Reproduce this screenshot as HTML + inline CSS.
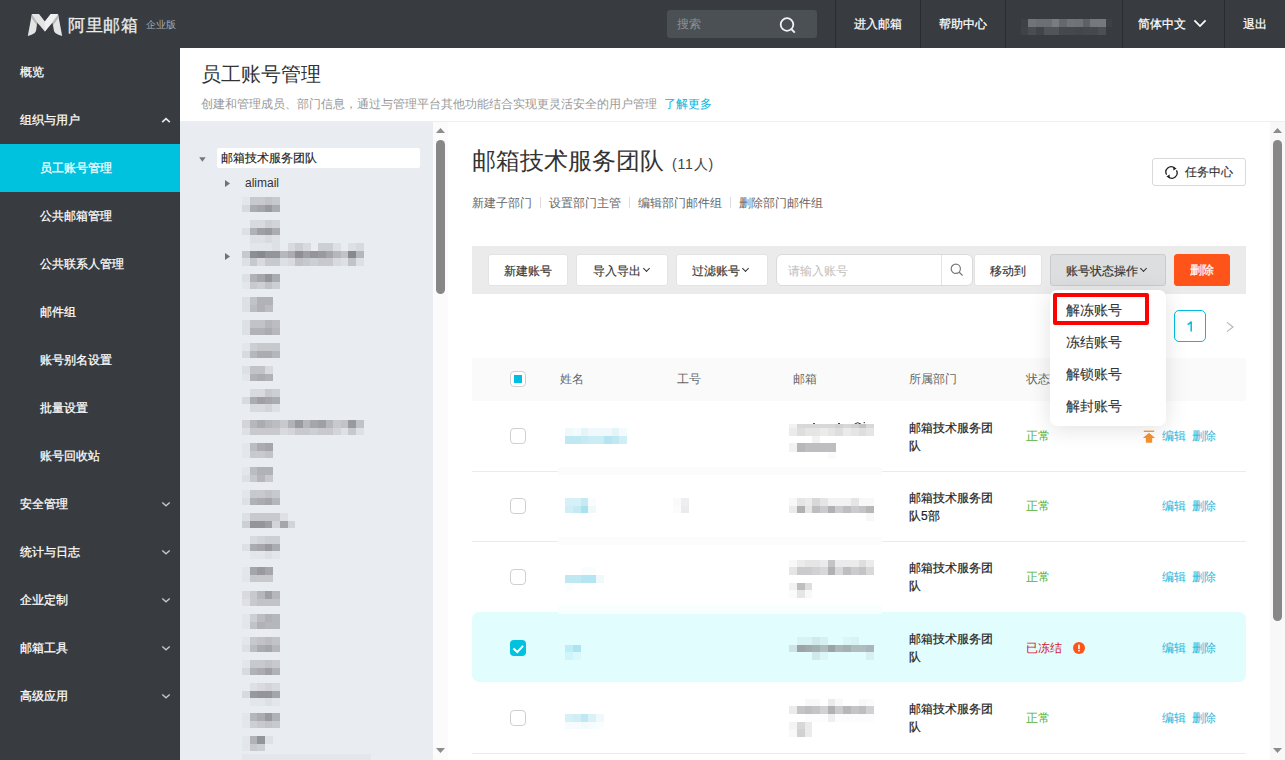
<!DOCTYPE html>
<html><head><meta charset="utf-8">
<style>
*{box-sizing:border-box;margin:0;padding:0}
html,body{width:1285px;height:760px;overflow:hidden;background:#fff;font-family:"Liberation Sans",sans-serif;color:#333;font-size:12px}
.a{position:absolute;white-space:nowrap}
#hdr{position:absolute;left:0;top:0;width:1285px;height:48px;background:#383c40}
#side{position:absolute;left:0;top:48px;width:180px;height:712px;background:#383c40}
.si{position:absolute;left:20px;color:#fff;font-size:12px;line-height:16px;-webkit-text-stroke:0.25px #fff}
.ss{left:40px}
.chev{position:absolute;left:162px;width:6px;height:6px;border-right:1.3px solid #a9adb1;border-bottom:1.3px solid #a9adb1;transform:rotate(45deg)}
.nav{position:absolute;top:0;height:48px;color:#fff;font-size:12px;line-height:48px;text-align:center;-webkit-text-stroke:0.25px #fff}
.dv{position:absolute;top:0;width:1px;height:48px;background:#2a2d30}
#tree{position:absolute;left:180px;top:122px;width:253px;height:638px;background:#e9ecf0}
.blk{position:absolute}
.btn{position:absolute;top:254px;height:32px;background:#fff;border:1px solid #e3e3e3;border-radius:3px;font-size:12px;line-height:32px;color:#333;-webkit-text-stroke:0.15px #333}
.cb{position:absolute;left:510px;width:16px;height:16px;border:1px solid #cfcfcf;border-radius:4px;background:#fff}
.dept{position:absolute;left:909px;font-size:12px;line-height:18px;color:#222;white-space:normal;width:90px;-webkit-text-stroke:0.2px #222}
.ok{position:absolute;left:1026px;color:#52b33a;font-size:12px;line-height:16px}
.lnk{position:absolute;color:#1fb5d9;font-size:12px;line-height:16px}
.vs{display:inline-block;width:1px;height:11px;background:#dcdcdc;margin:0 8px;vertical-align:-1px}
.dch{display:inline-block;width:5px;height:5px;border-right:1.5px solid #333;border-bottom:1.5px solid #333;transform:rotate(45deg);margin-left:3px;vertical-align:4px}
.sep{position:absolute;left:472px;width:774px;height:1px;background:#ebebeb}
</style></head><body>

<!-- HEADER -->
<div id="hdr"></div>
<svg class="a" style="left:24px;top:10px" width="42" height="30" viewBox="24 10 42 30">
  <path d="M31.9 13.9 L39 13.9 L44.9 21.4 L50.8 13.9 L58 13.9 L62.2 36 Q58 34.6 55.6 33.2 Q54 32 53.8 30 L52.6 22.4 L44.9 31.5 L37.2 22.4 L36.2 30 Q36 32 34.4 33.2 Q32 34.6 27.8 36 Z" fill="#e3e5e5"/>
  <path d="M32 14.4 L37.4 22.4 L37 25.4 L31.4 17.4 Z" fill="#b4b8b8"/>
  <path d="M58 14.4 L52.6 22.4 L53 25.4 L58.6 17.4 Z" fill="#b4b8b8"/>
  <path d="M44.9 21.4 L50.8 13.9 L58 13.9 L44.9 31.5 Z" fill="#f0f2f2"/>
</svg>
<div class="a" style="left:68px;top:14.5px;font-size:17px;line-height:22px;color:#eceded;letter-spacing:0.5px;-webkit-text-stroke:0.3px #eceded">阿里邮箱</div>
<div class="a" style="left:146px;top:18px;font-size:10px;line-height:14px;color:#a8abae">企业版</div>

<div class="a" style="left:667px;top:10px;width:150px;height:28px;background:#4b5054;border-radius:3px"></div>
<div class="a" style="left:677px;top:17px;font-size:12px;line-height:14px;color:#8d9195">搜索</div>
<svg class="a" style="left:779px;top:17px" width="18" height="17" viewBox="0 0 18 17">
  <circle cx="8" cy="7.5" r="6.3" fill="none" stroke="#f2f2f2" stroke-width="1.8"/>
  <path d="M12.3 12 L15.8 15.6" stroke="#f2f2f2" stroke-width="1.8"/>
</svg>

<div class="dv" style="left:835px"></div>
<div class="nav" style="left:836px;width:84px">进入邮箱</div>
<div class="dv" style="left:920px"></div>
<div class="nav" style="left:921px;width:84px">帮助中心</div>
<div class="dv" style="left:1005px"></div>
<div class="dv" style="left:1122px"></div>
<div class="nav" style="left:1123px;width:63px;text-align:right">简体中文</div>
<svg class="a" style="left:1193px;top:19px" width="14" height="9" viewBox="0 0 14 9"><path d="M1.4 1.4 L7 7 L12.6 1.4" fill="none" stroke="#fff" stroke-width="1.7"/></svg>
<div class="dv" style="left:1224px"></div>
<div class="nav" style="left:1225px;width:60px">退出</div>

<!-- SIDEBAR -->
<div id="side"></div>
<div class="a" style="left:0;top:144px;width:180px;height:48px;background:#00c1de"></div>
<div class="si" style="top:64px">概览</div>
<div class="si" style="top:112px">组织与用户</div>
<svg class="a" style="left:160px;top:116px" width="12" height="8" viewBox="0 0 12 8"><path d="M2.2 6.2 L6 2.6 L9.8 6.2" fill="none" stroke="#e6e6e6" stroke-width="1.7"/></svg>
<div class="si ss" style="top:160px">员工账号管理</div>
<div class="si ss" style="top:208px">公共邮箱管理</div>
<div class="si ss" style="top:256px">公共联系人管理</div>
<div class="si ss" style="top:304px">邮件组</div>
<div class="si ss" style="top:352px">账号别名设置</div>
<div class="si ss" style="top:400px">批量设置</div>
<div class="si ss" style="top:448px">账号回收站</div>
<div class="si" style="top:496px">安全管理</div>
<svg class="a" style="left:160px;top:500px" width="12" height="8" viewBox="0 0 12 8"><path d="M2.3 2.4 L6 5.8 L9.7 2.4" fill="none" stroke="#c8c8c8" stroke-width="1.3"/></svg>
<div class="si" style="top:544px">统计与日志</div>
<svg class="a" style="left:160px;top:548px" width="12" height="8" viewBox="0 0 12 8"><path d="M2.3 2.4 L6 5.8 L9.7 2.4" fill="none" stroke="#c8c8c8" stroke-width="1.3"/></svg>
<div class="si" style="top:592px">企业定制</div>
<svg class="a" style="left:160px;top:596px" width="12" height="8" viewBox="0 0 12 8"><path d="M2.3 2.4 L6 5.8 L9.7 2.4" fill="none" stroke="#c8c8c8" stroke-width="1.3"/></svg>
<div class="si" style="top:640px">邮箱工具</div>
<svg class="a" style="left:160px;top:644px" width="12" height="8" viewBox="0 0 12 8"><path d="M2.3 2.4 L6 5.8 L9.7 2.4" fill="none" stroke="#c8c8c8" stroke-width="1.3"/></svg>
<div class="si" style="top:688px">高级应用</div>
<svg class="a" style="left:160px;top:692px" width="12" height="8" viewBox="0 0 12 8"><path d="M2.3 2.4 L6 5.8 L9.7 2.4" fill="none" stroke="#c8c8c8" stroke-width="1.3"/></svg>

<!-- PAGE HEAD -->
<div class="a" style="left:201px;top:62px;font-size:20px;line-height:24px;color:#333">员工账号管理</div>
<div class="a" style="left:201px;top:96px;font-size:12px;line-height:16px;color:#999">创建和管理成员、部门信息，通过与管理平台其他功能结合实现更灵活安全的用户管理 <span style="color:#05b2dc;margin-left:4px">了解更多</span></div>
<div class="a" style="left:180px;top:121px;width:1105px;height:1px;background:#eeeeee"></div>

<!-- TREE -->
<div id="tree"></div>
<!-- tree root -->
<svg class="a" style="left:199px;top:157px" width="7" height="5" viewBox="0 0 7 5"><path d="M0.2 0.2 L6.6 0.2 L3.4 4.8 Z" fill="#74787d"/></svg>
<div class="a" style="left:217px;top:148px;width:203px;height:20px;background:#fff;border-radius:2px"></div>
<div class="a" style="left:221px;top:150px;font-size:12px;line-height:16px;color:#222;-webkit-text-stroke:0.15px #222">邮箱技术服务团队</div>
<svg class="a" style="left:225px;top:180px" width="5" height="7" viewBox="0 0 5 7"><path d="M0 0 L5 3.5 L0 7 Z" fill="#6f7378"/></svg>
<div class="a" style="left:245px;top:175px;font-size:12px;line-height:16px;color:#333">alimail</div>
<svg class="a" style="left:225px;top:253px" width="5" height="7" viewBox="0 0 5 7"><path d="M0 0 L5 3.5 L0 7 Z" fill="#6f7378"/></svg>
<div class="blk" style="left:242.0px;top:197.0px;width:7.8px;height:7.8px;background:rgb(227,230,234)"></div>
<div class="blk" style="left:249.6px;top:197.0px;width:7.8px;height:7.8px;background:rgb(199,201,205)"></div>
<div class="blk" style="left:257.2px;top:197.0px;width:7.8px;height:7.8px;background:rgb(199,201,205)"></div>
<div class="blk" style="left:264.8px;top:197.0px;width:7.8px;height:7.8px;background:rgb(193,195,200)"></div>
<div class="blk" style="left:272.4px;top:197.0px;width:7.8px;height:7.8px;background:rgb(199,201,205)"></div>
<div class="blk" style="left:242.0px;top:204.6px;width:7.8px;height:7.8px;background:rgb(216,218,222)"></div>
<div class="blk" style="left:249.6px;top:204.6px;width:7.8px;height:7.8px;background:rgb(170,172,177)"></div>
<div class="blk" style="left:257.2px;top:204.6px;width:7.8px;height:7.8px;background:rgb(165,166,171)"></div>
<div class="blk" style="left:264.8px;top:204.6px;width:7.8px;height:7.8px;background:rgb(153,154,160)"></div>
<div class="blk" style="left:272.4px;top:204.6px;width:7.8px;height:7.8px;background:rgb(170,172,177)"></div>
<div class="blk" style="left:249.6px;top:220.0px;width:7.8px;height:7.8px;background:rgb(216,218,222)"></div>
<div class="blk" style="left:257.2px;top:220.0px;width:7.8px;height:7.8px;background:rgb(216,218,222)"></div>
<div class="blk" style="left:264.8px;top:220.0px;width:7.8px;height:7.8px;background:rgb(204,207,211)"></div>
<div class="blk" style="left:272.4px;top:220.0px;width:7.8px;height:7.8px;background:rgb(210,212,217)"></div>
<div class="blk" style="left:242.0px;top:227.6px;width:7.8px;height:7.8px;background:rgb(221,224,228)"></div>
<div class="blk" style="left:249.6px;top:227.6px;width:7.8px;height:7.8px;background:rgb(176,178,183)"></div>
<div class="blk" style="left:257.2px;top:227.6px;width:7.8px;height:7.8px;background:rgb(159,160,165)"></div>
<div class="blk" style="left:264.8px;top:227.6px;width:7.8px;height:7.8px;background:rgb(153,154,160)"></div>
<div class="blk" style="left:272.4px;top:227.6px;width:7.8px;height:7.8px;background:rgb(170,172,177)"></div>
<div class="blk" style="left:249.6px;top:235.2px;width:7.8px;height:7.8px;background:rgb(221,224,228)"></div>
<div class="blk" style="left:257.2px;top:235.2px;width:7.8px;height:7.8px;background:rgb(221,224,228)"></div>
<div class="blk" style="left:264.8px;top:235.2px;width:7.8px;height:7.8px;background:rgb(216,218,222)"></div>
<div class="blk" style="left:272.4px;top:235.2px;width:7.8px;height:7.8px;background:rgb(221,224,228)"></div>
<div class="blk" style="left:249.6px;top:243.0px;width:7.8px;height:7.8px;background:rgb(227,230,234)"></div>
<div class="blk" style="left:257.2px;top:243.0px;width:7.8px;height:7.8px;background:rgb(227,230,234)"></div>
<div class="blk" style="left:264.8px;top:243.0px;width:7.8px;height:7.8px;background:rgb(227,230,234)"></div>
<div class="blk" style="left:272.4px;top:243.0px;width:7.8px;height:7.8px;background:rgb(221,224,228)"></div>
<div class="blk" style="left:287.6px;top:243.0px;width:7.8px;height:7.8px;background:rgb(216,218,222)"></div>
<div class="blk" style="left:295.2px;top:243.0px;width:7.8px;height:7.8px;background:rgb(204,207,211)"></div>
<div class="blk" style="left:302.8px;top:243.0px;width:7.8px;height:7.8px;background:rgb(216,218,222)"></div>
<div class="blk" style="left:318.0px;top:243.0px;width:7.8px;height:7.8px;background:rgb(204,207,211)"></div>
<div class="blk" style="left:325.6px;top:243.0px;width:7.8px;height:7.8px;background:rgb(204,207,211)"></div>
<div class="blk" style="left:333.2px;top:243.0px;width:7.8px;height:7.8px;background:rgb(221,224,228)"></div>
<div class="blk" style="left:348.4px;top:243.0px;width:7.8px;height:7.8px;background:rgb(221,224,228)"></div>
<div class="blk" style="left:356.0px;top:243.0px;width:7.8px;height:7.8px;background:rgb(216,218,222)"></div>
<div class="blk" style="left:242.0px;top:250.6px;width:7.8px;height:7.8px;background:rgb(199,201,205)"></div>
<div class="blk" style="left:249.6px;top:250.6px;width:7.8px;height:7.8px;background:rgb(142,143,148)"></div>
<div class="blk" style="left:257.2px;top:250.6px;width:7.8px;height:7.8px;background:rgb(136,137,143)"></div>
<div class="blk" style="left:264.8px;top:250.6px;width:7.8px;height:7.8px;background:rgb(148,149,154)"></div>
<div class="blk" style="left:272.4px;top:250.6px;width:7.8px;height:7.8px;background:rgb(148,149,154)"></div>
<div class="blk" style="left:280.0px;top:250.6px;width:7.8px;height:7.8px;background:rgb(182,183,188)"></div>
<div class="blk" style="left:287.6px;top:250.6px;width:7.8px;height:7.8px;background:rgb(170,172,177)"></div>
<div class="blk" style="left:295.2px;top:250.6px;width:7.8px;height:7.8px;background:rgb(142,143,148)"></div>
<div class="blk" style="left:302.8px;top:250.6px;width:7.8px;height:7.8px;background:rgb(159,160,165)"></div>
<div class="blk" style="left:310.4px;top:250.6px;width:7.8px;height:7.8px;background:rgb(148,149,154)"></div>
<div class="blk" style="left:318.0px;top:250.6px;width:7.8px;height:7.8px;background:rgb(153,154,160)"></div>
<div class="blk" style="left:325.6px;top:250.6px;width:7.8px;height:7.8px;background:rgb(165,166,171)"></div>
<div class="blk" style="left:333.2px;top:250.6px;width:7.8px;height:7.8px;background:rgb(182,183,188)"></div>
<div class="blk" style="left:340.8px;top:250.6px;width:7.8px;height:7.8px;background:rgb(193,195,200)"></div>
<div class="blk" style="left:348.4px;top:250.6px;width:7.8px;height:7.8px;background:rgb(136,137,143)"></div>
<div class="blk" style="left:356.0px;top:250.6px;width:7.8px;height:7.8px;background:rgb(182,183,188)"></div>
<div class="blk" style="left:242.0px;top:258.2px;width:7.8px;height:7.8px;background:rgb(221,224,228)"></div>
<div class="blk" style="left:249.6px;top:258.2px;width:7.8px;height:7.8px;background:rgb(199,201,205)"></div>
<div class="blk" style="left:257.2px;top:258.2px;width:7.8px;height:7.8px;background:rgb(216,218,222)"></div>
<div class="blk" style="left:264.8px;top:258.2px;width:7.8px;height:7.8px;background:rgb(199,201,205)"></div>
<div class="blk" style="left:272.4px;top:258.2px;width:7.8px;height:7.8px;background:rgb(199,201,205)"></div>
<div class="blk" style="left:280.0px;top:258.2px;width:7.8px;height:7.8px;background:rgb(221,224,228)"></div>
<div class="blk" style="left:287.6px;top:258.2px;width:7.8px;height:7.8px;background:rgb(216,218,222)"></div>
<div class="blk" style="left:295.2px;top:258.2px;width:7.8px;height:7.8px;background:rgb(193,195,200)"></div>
<div class="blk" style="left:302.8px;top:258.2px;width:7.8px;height:7.8px;background:rgb(199,201,205)"></div>
<div class="blk" style="left:310.4px;top:258.2px;width:7.8px;height:7.8px;background:rgb(204,207,211)"></div>
<div class="blk" style="left:318.0px;top:258.2px;width:7.8px;height:7.8px;background:rgb(199,201,205)"></div>
<div class="blk" style="left:325.6px;top:258.2px;width:7.8px;height:7.8px;background:rgb(199,201,205)"></div>
<div class="blk" style="left:333.2px;top:258.2px;width:7.8px;height:7.8px;background:rgb(216,218,222)"></div>
<div class="blk" style="left:340.8px;top:258.2px;width:7.8px;height:7.8px;background:rgb(221,224,228)"></div>
<div class="blk" style="left:348.4px;top:258.2px;width:7.8px;height:7.8px;background:rgb(193,195,200)"></div>
<div class="blk" style="left:356.0px;top:258.2px;width:7.8px;height:7.8px;background:rgb(221,224,228)"></div>
<div class="blk" style="left:242.0px;top:274.0px;width:7.8px;height:7.8px;background:rgb(221,224,228)"></div>
<div class="blk" style="left:249.6px;top:274.0px;width:7.8px;height:7.8px;background:rgb(176,178,183)"></div>
<div class="blk" style="left:257.2px;top:274.0px;width:7.8px;height:7.8px;background:rgb(165,166,171)"></div>
<div class="blk" style="left:264.8px;top:274.0px;width:7.8px;height:7.8px;background:rgb(148,149,154)"></div>
<div class="blk" style="left:272.4px;top:274.0px;width:7.8px;height:7.8px;background:rgb(170,172,177)"></div>
<div class="blk" style="left:242.0px;top:281.6px;width:7.8px;height:7.8px;background:rgb(227,230,234)"></div>
<div class="blk" style="left:249.6px;top:281.6px;width:7.8px;height:7.8px;background:rgb(199,201,205)"></div>
<div class="blk" style="left:257.2px;top:281.6px;width:7.8px;height:7.8px;background:rgb(204,207,211)"></div>
<div class="blk" style="left:264.8px;top:281.6px;width:7.8px;height:7.8px;background:rgb(193,195,200)"></div>
<div class="blk" style="left:272.4px;top:281.6px;width:7.8px;height:7.8px;background:rgb(204,207,211)"></div>
<div class="blk" style="left:242.0px;top:297.0px;width:7.8px;height:7.8px;background:rgb(221,224,228)"></div>
<div class="blk" style="left:249.6px;top:297.0px;width:7.8px;height:7.8px;background:rgb(193,195,200)"></div>
<div class="blk" style="left:257.2px;top:297.0px;width:7.8px;height:7.8px;background:rgb(176,178,183)"></div>
<div class="blk" style="left:264.8px;top:297.0px;width:7.8px;height:7.8px;background:rgb(176,178,183)"></div>
<div class="blk" style="left:242.0px;top:304.6px;width:7.8px;height:7.8px;background:rgb(221,224,228)"></div>
<div class="blk" style="left:249.6px;top:304.6px;width:7.8px;height:7.8px;background:rgb(187,189,194)"></div>
<div class="blk" style="left:257.2px;top:304.6px;width:7.8px;height:7.8px;background:rgb(176,178,183)"></div>
<div class="blk" style="left:264.8px;top:304.6px;width:7.8px;height:7.8px;background:rgb(187,189,194)"></div>
<div class="blk" style="left:242.0px;top:320.0px;width:7.8px;height:7.8px;background:rgb(221,224,228)"></div>
<div class="blk" style="left:249.6px;top:320.0px;width:7.8px;height:7.8px;background:rgb(193,195,200)"></div>
<div class="blk" style="left:257.2px;top:320.0px;width:7.8px;height:7.8px;background:rgb(193,195,200)"></div>
<div class="blk" style="left:264.8px;top:320.0px;width:7.8px;height:7.8px;background:rgb(182,183,188)"></div>
<div class="blk" style="left:272.4px;top:320.0px;width:7.8px;height:7.8px;background:rgb(187,189,194)"></div>
<div class="blk" style="left:242.0px;top:327.6px;width:7.8px;height:7.8px;background:rgb(221,224,228)"></div>
<div class="blk" style="left:249.6px;top:327.6px;width:7.8px;height:7.8px;background:rgb(176,178,183)"></div>
<div class="blk" style="left:257.2px;top:327.6px;width:7.8px;height:7.8px;background:rgb(176,178,183)"></div>
<div class="blk" style="left:264.8px;top:327.6px;width:7.8px;height:7.8px;background:rgb(170,172,177)"></div>
<div class="blk" style="left:272.4px;top:327.6px;width:7.8px;height:7.8px;background:rgb(182,183,188)"></div>
<div class="blk" style="left:242.0px;top:343.0px;width:7.8px;height:7.8px;background:rgb(227,230,234)"></div>
<div class="blk" style="left:249.6px;top:343.0px;width:7.8px;height:7.8px;background:rgb(204,207,211)"></div>
<div class="blk" style="left:257.2px;top:343.0px;width:7.8px;height:7.8px;background:rgb(199,201,205)"></div>
<div class="blk" style="left:264.8px;top:343.0px;width:7.8px;height:7.8px;background:rgb(199,201,205)"></div>
<div class="blk" style="left:272.4px;top:343.0px;width:7.8px;height:7.8px;background:rgb(199,201,205)"></div>
<div class="blk" style="left:242.0px;top:350.6px;width:7.8px;height:7.8px;background:rgb(216,218,222)"></div>
<div class="blk" style="left:249.6px;top:350.6px;width:7.8px;height:7.8px;background:rgb(182,183,188)"></div>
<div class="blk" style="left:257.2px;top:350.6px;width:7.8px;height:7.8px;background:rgb(170,172,177)"></div>
<div class="blk" style="left:264.8px;top:350.6px;width:7.8px;height:7.8px;background:rgb(170,172,177)"></div>
<div class="blk" style="left:272.4px;top:350.6px;width:7.8px;height:7.8px;background:rgb(182,183,188)"></div>
<div class="blk" style="left:242.0px;top:366.0px;width:7.8px;height:7.8px;background:rgb(221,224,228)"></div>
<div class="blk" style="left:249.6px;top:366.0px;width:7.8px;height:7.8px;background:rgb(193,195,200)"></div>
<div class="blk" style="left:257.2px;top:366.0px;width:7.8px;height:7.8px;background:rgb(193,195,200)"></div>
<div class="blk" style="left:264.8px;top:366.0px;width:7.8px;height:7.8px;background:rgb(216,218,222)"></div>
<div class="blk" style="left:242.0px;top:373.6px;width:7.8px;height:7.8px;background:rgb(227,230,234)"></div>
<div class="blk" style="left:249.6px;top:373.6px;width:7.8px;height:7.8px;background:rgb(176,178,183)"></div>
<div class="blk" style="left:257.2px;top:373.6px;width:7.8px;height:7.8px;background:rgb(170,172,177)"></div>
<div class="blk" style="left:264.8px;top:373.6px;width:7.8px;height:7.8px;background:rgb(176,178,183)"></div>
<div class="blk" style="left:249.6px;top:389.0px;width:7.8px;height:7.8px;background:rgb(216,218,222)"></div>
<div class="blk" style="left:257.2px;top:389.0px;width:7.8px;height:7.8px;background:rgb(216,218,222)"></div>
<div class="blk" style="left:264.8px;top:389.0px;width:7.8px;height:7.8px;background:rgb(199,201,205)"></div>
<div class="blk" style="left:272.4px;top:389.0px;width:7.8px;height:7.8px;background:rgb(204,207,211)"></div>
<div class="blk" style="left:242.0px;top:396.6px;width:7.8px;height:7.8px;background:rgb(216,218,222)"></div>
<div class="blk" style="left:249.6px;top:396.6px;width:7.8px;height:7.8px;background:rgb(170,172,177)"></div>
<div class="blk" style="left:257.2px;top:396.6px;width:7.8px;height:7.8px;background:rgb(159,160,165)"></div>
<div class="blk" style="left:264.8px;top:396.6px;width:7.8px;height:7.8px;background:rgb(165,166,171)"></div>
<div class="blk" style="left:272.4px;top:396.6px;width:7.8px;height:7.8px;background:rgb(170,172,177)"></div>
<div class="blk" style="left:249.6px;top:404.2px;width:7.8px;height:7.8px;background:rgb(216,218,222)"></div>
<div class="blk" style="left:257.2px;top:404.2px;width:7.8px;height:7.8px;background:rgb(216,218,222)"></div>
<div class="blk" style="left:264.8px;top:404.2px;width:7.8px;height:7.8px;background:rgb(210,212,217)"></div>
<div class="blk" style="left:272.4px;top:404.2px;width:7.8px;height:7.8px;background:rgb(221,224,228)"></div>
<div class="blk" style="left:242.0px;top:420.0px;width:7.8px;height:7.8px;background:rgb(210,212,217)"></div>
<div class="blk" style="left:249.6px;top:420.0px;width:7.8px;height:7.8px;background:rgb(182,183,188)"></div>
<div class="blk" style="left:257.2px;top:420.0px;width:7.8px;height:7.8px;background:rgb(170,172,177)"></div>
<div class="blk" style="left:264.8px;top:420.0px;width:7.8px;height:7.8px;background:rgb(182,183,188)"></div>
<div class="blk" style="left:272.4px;top:420.0px;width:7.8px;height:7.8px;background:rgb(187,189,194)"></div>
<div class="blk" style="left:280.0px;top:420.0px;width:7.8px;height:7.8px;background:rgb(199,201,205)"></div>
<div class="blk" style="left:287.6px;top:420.0px;width:7.8px;height:7.8px;background:rgb(176,178,183)"></div>
<div class="blk" style="left:295.2px;top:420.0px;width:7.8px;height:7.8px;background:rgb(153,154,160)"></div>
<div class="blk" style="left:302.8px;top:420.0px;width:7.8px;height:7.8px;background:rgb(182,183,188)"></div>
<div class="blk" style="left:310.4px;top:420.0px;width:7.8px;height:7.8px;background:rgb(165,166,171)"></div>
<div class="blk" style="left:318.0px;top:420.0px;width:7.8px;height:7.8px;background:rgb(159,160,165)"></div>
<div class="blk" style="left:325.6px;top:420.0px;width:7.8px;height:7.8px;background:rgb(182,183,188)"></div>
<div class="blk" style="left:333.2px;top:420.0px;width:7.8px;height:7.8px;background:rgb(199,201,205)"></div>
<div class="blk" style="left:340.8px;top:420.0px;width:7.8px;height:7.8px;background:rgb(193,195,200)"></div>
<div class="blk" style="left:348.4px;top:420.0px;width:7.8px;height:7.8px;background:rgb(153,154,160)"></div>
<div class="blk" style="left:356.0px;top:420.0px;width:7.8px;height:7.8px;background:rgb(193,195,200)"></div>
<div class="blk" style="left:242.0px;top:427.6px;width:7.8px;height:7.8px;background:rgb(221,224,228)"></div>
<div class="blk" style="left:249.6px;top:427.6px;width:7.8px;height:7.8px;background:rgb(199,201,205)"></div>
<div class="blk" style="left:257.2px;top:427.6px;width:7.8px;height:7.8px;background:rgb(199,201,205)"></div>
<div class="blk" style="left:264.8px;top:427.6px;width:7.8px;height:7.8px;background:rgb(199,201,205)"></div>
<div class="blk" style="left:272.4px;top:427.6px;width:7.8px;height:7.8px;background:rgb(199,201,205)"></div>
<div class="blk" style="left:280.0px;top:427.6px;width:7.8px;height:7.8px;background:rgb(216,218,222)"></div>
<div class="blk" style="left:287.6px;top:427.6px;width:7.8px;height:7.8px;background:rgb(210,212,217)"></div>
<div class="blk" style="left:295.2px;top:427.6px;width:7.8px;height:7.8px;background:rgb(199,201,205)"></div>
<div class="blk" style="left:302.8px;top:427.6px;width:7.8px;height:7.8px;background:rgb(199,201,205)"></div>
<div class="blk" style="left:310.4px;top:427.6px;width:7.8px;height:7.8px;background:rgb(204,207,211)"></div>
<div class="blk" style="left:318.0px;top:427.6px;width:7.8px;height:7.8px;background:rgb(199,201,205)"></div>
<div class="blk" style="left:325.6px;top:427.6px;width:7.8px;height:7.8px;background:rgb(199,201,205)"></div>
<div class="blk" style="left:333.2px;top:427.6px;width:7.8px;height:7.8px;background:rgb(210,212,217)"></div>
<div class="blk" style="left:340.8px;top:427.6px;width:7.8px;height:7.8px;background:rgb(221,224,228)"></div>
<div class="blk" style="left:348.4px;top:427.6px;width:7.8px;height:7.8px;background:rgb(199,201,205)"></div>
<div class="blk" style="left:356.0px;top:427.6px;width:7.8px;height:7.8px;background:rgb(221,224,228)"></div>
<div class="blk" style="left:242.0px;top:443.0px;width:7.8px;height:7.8px;background:rgb(227,230,234)"></div>
<div class="blk" style="left:249.6px;top:443.0px;width:7.8px;height:7.8px;background:rgb(187,189,194)"></div>
<div class="blk" style="left:257.2px;top:443.0px;width:7.8px;height:7.8px;background:rgb(170,172,177)"></div>
<div class="blk" style="left:264.8px;top:443.0px;width:7.8px;height:7.8px;background:rgb(165,166,171)"></div>
<div class="blk" style="left:242.0px;top:450.6px;width:7.8px;height:7.8px;background:rgb(227,230,234)"></div>
<div class="blk" style="left:249.6px;top:450.6px;width:7.8px;height:7.8px;background:rgb(199,201,205)"></div>
<div class="blk" style="left:257.2px;top:450.6px;width:7.8px;height:7.8px;background:rgb(199,201,205)"></div>
<div class="blk" style="left:264.8px;top:450.6px;width:7.8px;height:7.8px;background:rgb(193,195,200)"></div>
<div class="blk" style="left:242.0px;top:467.0px;width:7.8px;height:7.8px;background:rgb(227,230,234)"></div>
<div class="blk" style="left:249.6px;top:467.0px;width:7.8px;height:7.8px;background:rgb(187,189,194)"></div>
<div class="blk" style="left:257.2px;top:467.0px;width:7.8px;height:7.8px;background:rgb(176,178,183)"></div>
<div class="blk" style="left:264.8px;top:467.0px;width:7.8px;height:7.8px;background:rgb(176,178,183)"></div>
<div class="blk" style="left:242.0px;top:474.6px;width:7.8px;height:7.8px;background:rgb(221,224,228)"></div>
<div class="blk" style="left:249.6px;top:474.6px;width:7.8px;height:7.8px;background:rgb(199,201,205)"></div>
<div class="blk" style="left:257.2px;top:474.6px;width:7.8px;height:7.8px;background:rgb(182,183,188)"></div>
<div class="blk" style="left:264.8px;top:474.6px;width:7.8px;height:7.8px;background:rgb(199,201,205)"></div>
<div class="blk" style="left:242.0px;top:490.0px;width:7.8px;height:7.8px;background:rgb(227,230,234)"></div>
<div class="blk" style="left:249.6px;top:490.0px;width:7.8px;height:7.8px;background:rgb(199,201,205)"></div>
<div class="blk" style="left:257.2px;top:490.0px;width:7.8px;height:7.8px;background:rgb(199,201,205)"></div>
<div class="blk" style="left:264.8px;top:490.0px;width:7.8px;height:7.8px;background:rgb(193,195,200)"></div>
<div class="blk" style="left:272.4px;top:490.0px;width:7.8px;height:7.8px;background:rgb(199,201,205)"></div>
<div class="blk" style="left:242.0px;top:497.6px;width:7.8px;height:7.8px;background:rgb(221,224,228)"></div>
<div class="blk" style="left:249.6px;top:497.6px;width:7.8px;height:7.8px;background:rgb(176,178,183)"></div>
<div class="blk" style="left:257.2px;top:497.6px;width:7.8px;height:7.8px;background:rgb(170,172,177)"></div>
<div class="blk" style="left:264.8px;top:497.6px;width:7.8px;height:7.8px;background:rgb(165,166,171)"></div>
<div class="blk" style="left:272.4px;top:497.6px;width:7.8px;height:7.8px;background:rgb(182,183,188)"></div>
<div class="blk" style="left:242.0px;top:513.0px;width:7.8px;height:7.8px;background:rgb(221,224,228)"></div>
<div class="blk" style="left:249.6px;top:513.0px;width:7.8px;height:7.8px;background:rgb(199,201,205)"></div>
<div class="blk" style="left:257.2px;top:513.0px;width:7.8px;height:7.8px;background:rgb(199,201,205)"></div>
<div class="blk" style="left:264.8px;top:513.0px;width:7.8px;height:7.8px;background:rgb(199,201,205)"></div>
<div class="blk" style="left:272.4px;top:513.0px;width:7.8px;height:7.8px;background:rgb(199,201,205)"></div>
<div class="blk" style="left:280.0px;top:513.0px;width:7.8px;height:7.8px;background:rgb(221,224,228)"></div>
<div class="blk" style="left:242.0px;top:520.6px;width:7.8px;height:7.8px;background:rgb(204,207,211)"></div>
<div class="blk" style="left:249.6px;top:520.6px;width:7.8px;height:7.8px;background:rgb(148,149,154)"></div>
<div class="blk" style="left:257.2px;top:520.6px;width:7.8px;height:7.8px;background:rgb(148,149,154)"></div>
<div class="blk" style="left:264.8px;top:520.6px;width:7.8px;height:7.8px;background:rgb(159,160,165)"></div>
<div class="blk" style="left:272.4px;top:520.6px;width:7.8px;height:7.8px;background:rgb(210,212,217)"></div>
<div class="blk" style="left:280.0px;top:520.6px;width:7.8px;height:7.8px;background:rgb(165,166,171)"></div>
<div class="blk" style="left:287.6px;top:520.6px;width:7.8px;height:7.8px;background:rgb(210,212,217)"></div>
<div class="blk" style="left:249.6px;top:536.0px;width:7.8px;height:7.8px;background:rgb(216,218,222)"></div>
<div class="blk" style="left:257.2px;top:536.0px;width:7.8px;height:7.8px;background:rgb(210,212,217)"></div>
<div class="blk" style="left:264.8px;top:536.0px;width:7.8px;height:7.8px;background:rgb(204,207,211)"></div>
<div class="blk" style="left:272.4px;top:536.0px;width:7.8px;height:7.8px;background:rgb(204,207,211)"></div>
<div class="blk" style="left:242.0px;top:543.6px;width:7.8px;height:7.8px;background:rgb(221,224,228)"></div>
<div class="blk" style="left:249.6px;top:543.6px;width:7.8px;height:7.8px;background:rgb(170,172,177)"></div>
<div class="blk" style="left:257.2px;top:543.6px;width:7.8px;height:7.8px;background:rgb(165,166,171)"></div>
<div class="blk" style="left:264.8px;top:543.6px;width:7.8px;height:7.8px;background:rgb(153,154,160)"></div>
<div class="blk" style="left:272.4px;top:543.6px;width:7.8px;height:7.8px;background:rgb(170,172,177)"></div>
<div class="blk" style="left:249.6px;top:551.2px;width:7.8px;height:7.8px;background:rgb(227,230,234)"></div>
<div class="blk" style="left:257.2px;top:551.2px;width:7.8px;height:7.8px;background:rgb(227,230,234)"></div>
<div class="blk" style="left:264.8px;top:551.2px;width:7.8px;height:7.8px;background:rgb(221,224,228)"></div>
<div class="blk" style="left:272.4px;top:551.2px;width:7.8px;height:7.8px;background:rgb(227,230,234)"></div>
<div class="blk" style="left:242.0px;top:567.0px;width:7.8px;height:7.8px;background:rgb(227,230,234)"></div>
<div class="blk" style="left:249.6px;top:567.0px;width:7.8px;height:7.8px;background:rgb(165,166,171)"></div>
<div class="blk" style="left:257.2px;top:567.0px;width:7.8px;height:7.8px;background:rgb(153,154,160)"></div>
<div class="blk" style="left:264.8px;top:567.0px;width:7.8px;height:7.8px;background:rgb(165,166,171)"></div>
<div class="blk" style="left:242.0px;top:574.6px;width:7.8px;height:7.8px;background:rgb(227,230,234)"></div>
<div class="blk" style="left:249.6px;top:574.6px;width:7.8px;height:7.8px;background:rgb(199,201,205)"></div>
<div class="blk" style="left:257.2px;top:574.6px;width:7.8px;height:7.8px;background:rgb(199,201,205)"></div>
<div class="blk" style="left:264.8px;top:574.6px;width:7.8px;height:7.8px;background:rgb(199,201,205)"></div>
<div class="blk" style="left:242.0px;top:591.0px;width:7.8px;height:7.8px;background:rgb(216,218,222)"></div>
<div class="blk" style="left:249.6px;top:591.0px;width:7.8px;height:7.8px;background:rgb(199,201,205)"></div>
<div class="blk" style="left:257.2px;top:591.0px;width:7.8px;height:7.8px;background:rgb(182,183,188)"></div>
<div class="blk" style="left:264.8px;top:591.0px;width:7.8px;height:7.8px;background:rgb(159,160,165)"></div>
<div class="blk" style="left:272.4px;top:591.0px;width:7.8px;height:7.8px;background:rgb(182,183,188)"></div>
<div class="blk" style="left:242.0px;top:598.6px;width:7.8px;height:7.8px;background:rgb(221,224,228)"></div>
<div class="blk" style="left:249.6px;top:598.6px;width:7.8px;height:7.8px;background:rgb(199,201,205)"></div>
<div class="blk" style="left:257.2px;top:598.6px;width:7.8px;height:7.8px;background:rgb(193,195,200)"></div>
<div class="blk" style="left:264.8px;top:598.6px;width:7.8px;height:7.8px;background:rgb(193,195,200)"></div>
<div class="blk" style="left:272.4px;top:598.6px;width:7.8px;height:7.8px;background:rgb(193,195,200)"></div>
<div class="blk" style="left:242.0px;top:614.0px;width:7.8px;height:7.8px;background:rgb(227,230,234)"></div>
<div class="blk" style="left:249.6px;top:614.0px;width:7.8px;height:7.8px;background:rgb(204,207,211)"></div>
<div class="blk" style="left:257.2px;top:614.0px;width:7.8px;height:7.8px;background:rgb(187,189,194)"></div>
<div class="blk" style="left:264.8px;top:614.0px;width:7.8px;height:7.8px;background:rgb(176,178,183)"></div>
<div class="blk" style="left:272.4px;top:614.0px;width:7.8px;height:7.8px;background:rgb(182,183,188)"></div>
<div class="blk" style="left:242.0px;top:621.6px;width:7.8px;height:7.8px;background:rgb(227,230,234)"></div>
<div class="blk" style="left:249.6px;top:621.6px;width:7.8px;height:7.8px;background:rgb(193,195,200)"></div>
<div class="blk" style="left:257.2px;top:621.6px;width:7.8px;height:7.8px;background:rgb(176,178,183)"></div>
<div class="blk" style="left:264.8px;top:621.6px;width:7.8px;height:7.8px;background:rgb(182,183,188)"></div>
<div class="blk" style="left:272.4px;top:621.6px;width:7.8px;height:7.8px;background:rgb(182,183,188)"></div>
<div class="blk" style="left:242.0px;top:637.0px;width:7.8px;height:7.8px;background:rgb(227,230,234)"></div>
<div class="blk" style="left:249.6px;top:637.0px;width:7.8px;height:7.8px;background:rgb(199,201,205)"></div>
<div class="blk" style="left:257.2px;top:637.0px;width:7.8px;height:7.8px;background:rgb(193,195,200)"></div>
<div class="blk" style="left:264.8px;top:637.0px;width:7.8px;height:7.8px;background:rgb(187,189,194)"></div>
<div class="blk" style="left:272.4px;top:637.0px;width:7.8px;height:7.8px;background:rgb(193,195,200)"></div>
<div class="blk" style="left:242.0px;top:644.6px;width:7.8px;height:7.8px;background:rgb(221,224,228)"></div>
<div class="blk" style="left:249.6px;top:644.6px;width:7.8px;height:7.8px;background:rgb(187,189,194)"></div>
<div class="blk" style="left:257.2px;top:644.6px;width:7.8px;height:7.8px;background:rgb(170,172,177)"></div>
<div class="blk" style="left:264.8px;top:644.6px;width:7.8px;height:7.8px;background:rgb(165,166,171)"></div>
<div class="blk" style="left:272.4px;top:644.6px;width:7.8px;height:7.8px;background:rgb(182,183,188)"></div>
<div class="blk" style="left:242.0px;top:660.0px;width:7.8px;height:7.8px;background:rgb(227,230,234)"></div>
<div class="blk" style="left:249.6px;top:660.0px;width:7.8px;height:7.8px;background:rgb(199,201,205)"></div>
<div class="blk" style="left:257.2px;top:660.0px;width:7.8px;height:7.8px;background:rgb(199,201,205)"></div>
<div class="blk" style="left:264.8px;top:660.0px;width:7.8px;height:7.8px;background:rgb(193,195,200)"></div>
<div class="blk" style="left:272.4px;top:660.0px;width:7.8px;height:7.8px;background:rgb(199,201,205)"></div>
<div class="blk" style="left:242.0px;top:667.6px;width:7.8px;height:7.8px;background:rgb(216,218,222)"></div>
<div class="blk" style="left:249.6px;top:667.6px;width:7.8px;height:7.8px;background:rgb(176,178,183)"></div>
<div class="blk" style="left:257.2px;top:667.6px;width:7.8px;height:7.8px;background:rgb(170,172,177)"></div>
<div class="blk" style="left:264.8px;top:667.6px;width:7.8px;height:7.8px;background:rgb(159,160,165)"></div>
<div class="blk" style="left:272.4px;top:667.6px;width:7.8px;height:7.8px;background:rgb(176,178,183)"></div>
<div class="blk" style="left:249.6px;top:683.0px;width:7.8px;height:7.8px;background:rgb(221,224,228)"></div>
<div class="blk" style="left:257.2px;top:683.0px;width:7.8px;height:7.8px;background:rgb(216,218,222)"></div>
<div class="blk" style="left:264.8px;top:683.0px;width:7.8px;height:7.8px;background:rgb(210,212,217)"></div>
<div class="blk" style="left:272.4px;top:683.0px;width:7.8px;height:7.8px;background:rgb(216,218,222)"></div>
<div class="blk" style="left:242.0px;top:690.6px;width:7.8px;height:7.8px;background:rgb(216,218,222)"></div>
<div class="blk" style="left:249.6px;top:690.6px;width:7.8px;height:7.8px;background:rgb(153,154,160)"></div>
<div class="blk" style="left:257.2px;top:690.6px;width:7.8px;height:7.8px;background:rgb(148,149,154)"></div>
<div class="blk" style="left:264.8px;top:690.6px;width:7.8px;height:7.8px;background:rgb(148,149,154)"></div>
<div class="blk" style="left:272.4px;top:690.6px;width:7.8px;height:7.8px;background:rgb(165,166,171)"></div>
<div class="blk" style="left:249.6px;top:698.2px;width:7.8px;height:7.8px;background:rgb(227,230,234)"></div>
<div class="blk" style="left:257.2px;top:698.2px;width:7.8px;height:7.8px;background:rgb(227,230,234)"></div>
<div class="blk" style="left:264.8px;top:698.2px;width:7.8px;height:7.8px;background:rgb(221,224,228)"></div>
<div class="blk" style="left:272.4px;top:698.2px;width:7.8px;height:7.8px;background:rgb(227,230,234)"></div>
<div class="blk" style="left:242.0px;top:713.0px;width:7.8px;height:7.8px;background:rgb(227,230,234)"></div>
<div class="blk" style="left:249.6px;top:713.0px;width:7.8px;height:7.8px;background:rgb(182,183,188)"></div>
<div class="blk" style="left:257.2px;top:713.0px;width:7.8px;height:7.8px;background:rgb(170,172,177)"></div>
<div class="blk" style="left:264.8px;top:713.0px;width:7.8px;height:7.8px;background:rgb(153,154,160)"></div>
<div class="blk" style="left:272.4px;top:713.0px;width:7.8px;height:7.8px;background:rgb(176,178,183)"></div>
<div class="blk" style="left:242.0px;top:720.6px;width:7.8px;height:7.8px;background:rgb(227,230,234)"></div>
<div class="blk" style="left:249.6px;top:720.6px;width:7.8px;height:7.8px;background:rgb(204,207,211)"></div>
<div class="blk" style="left:257.2px;top:720.6px;width:7.8px;height:7.8px;background:rgb(199,201,205)"></div>
<div class="blk" style="left:264.8px;top:720.6px;width:7.8px;height:7.8px;background:rgb(193,195,200)"></div>
<div class="blk" style="left:272.4px;top:720.6px;width:7.8px;height:7.8px;background:rgb(199,201,205)"></div>
<div class="blk" style="left:242.0px;top:736.0px;width:7.8px;height:7.8px;background:rgb(227,230,234)"></div>
<div class="blk" style="left:249.6px;top:736.0px;width:7.8px;height:7.8px;background:rgb(176,178,183)"></div>
<div class="blk" style="left:257.2px;top:736.0px;width:7.8px;height:7.8px;background:rgb(148,149,154)"></div>
<div class="blk" style="left:264.8px;top:736.0px;width:7.8px;height:7.8px;background:rgb(221,224,228)"></div>
<div class="blk" style="left:242.0px;top:743.6px;width:7.8px;height:7.8px;background:rgb(227,230,234)"></div>
<div class="blk" style="left:249.6px;top:743.6px;width:7.8px;height:7.8px;background:rgb(199,201,205)"></div>
<div class="blk" style="left:257.2px;top:743.6px;width:7.8px;height:7.8px;background:rgb(204,207,211)"></div>
<div class="blk" style="left:242.0px;top:754.0px;width:7.8px;height:7.8px;background:rgb(227,230,234)"></div>
<div class="blk" style="left:249.6px;top:754.0px;width:7.8px;height:7.8px;background:rgb(227,230,234)"></div>
<div class="blk" style="left:257.2px;top:754.0px;width:7.8px;height:7.8px;background:rgb(227,230,234)"></div>
<div class="blk" style="left:264.8px;top:754.0px;width:7.8px;height:7.8px;background:rgb(227,230,234)"></div>
<div class="blk" style="left:272.4px;top:754.0px;width:7.8px;height:7.8px;background:rgb(227,230,234)"></div>
<div class="blk" style="left:280.0px;top:754.0px;width:7.8px;height:7.8px;background:rgb(227,230,234)"></div>
<div class="blk" style="left:287.6px;top:754.0px;width:7.8px;height:7.8px;background:rgb(227,230,234)"></div>
<div class="blk" style="left:295.2px;top:754.0px;width:7.8px;height:7.8px;background:rgb(227,230,234)"></div>
<div class="blk" style="left:302.8px;top:754.0px;width:7.8px;height:7.8px;background:rgb(227,230,234)"></div>
<div class="blk" style="left:310.4px;top:754.0px;width:7.8px;height:7.8px;background:rgb(227,230,234)"></div>
<div class="blk" style="left:318.0px;top:754.0px;width:7.8px;height:7.8px;background:rgb(227,230,234)"></div>
<div class="blk" style="left:325.6px;top:754.0px;width:7.8px;height:7.8px;background:rgb(227,230,234)"></div>
<div class="blk" style="left:333.2px;top:754.0px;width:7.8px;height:7.8px;background:rgb(227,230,234)"></div>
<div class="blk" style="left:340.8px;top:754.0px;width:7.8px;height:7.8px;background:rgb(227,230,234)"></div>
<div class="blk" style="left:348.4px;top:754.0px;width:7.8px;height:7.8px;background:rgb(227,230,234)"></div>
<div class="blk" style="left:356.0px;top:754.0px;width:7.8px;height:7.8px;background:rgb(227,230,234)"></div>
<div class="blk" style="left:363.6px;top:754.0px;width:7.8px;height:7.8px;background:rgb(227,230,234)"></div>
<!-- tree scrollbar -->
<div class="a" style="left:433px;top:122px;width:15px;height:638px;background:#fbfbfb"></div>
<svg class="a" style="left:436px;top:128px" width="9" height="5" viewBox="0 0 9 5"><path d="M0 5 L4.5 0 L9 5 Z" fill="#8c8c8c"/></svg>
<div class="a" style="left:436px;top:140px;width:9px;height:154px;background:#878787;border-radius:5px"></div>
<svg class="a" style="left:436px;top:748px" width="9" height="5" viewBox="0 0 9 5"><path d="M0 0 L4.5 5 L9 0 Z" fill="#8c8c8c"/></svg>

<!-- main scrollbar -->
<div class="a" style="left:1270px;top:122px;width:15px;height:638px;background:#f8f8f8"></div>
<svg class="a" style="left:1273px;top:128px" width="9" height="5" viewBox="0 0 9 5"><path d="M0 5 L4.5 0 L9 5 Z" fill="#8c8c8c"/></svg>
<div class="a" style="left:1273px;top:140px;width:9px;height:481px;background:#878787;border-radius:5px"></div>
<svg class="a" style="left:1273px;top:748px" width="9" height="5" viewBox="0 0 9 5"><path d="M0 0 L4.5 5 L9 0 Z" fill="#8c8c8c"/></svg>

<!-- title -->
<div class="a" style="left:472px;top:146px;font-size:24px;line-height:30px;color:#333">邮箱技术服务团队<span style="font-size:14px;margin-left:8px;letter-spacing:0.8px;color:#444">(11人)</span></div>
<div class="a" style="left:472px;top:195px;font-size:12px;line-height:16px;color:#666">新建子部门<span class="vs"></span>设置部门主管<span class="vs"></span>编辑部门邮件组<span class="vs"></span>删除部门邮件组</div>

<!-- task center -->
<div class="a" style="left:1152px;top:158px;width:94px;height:28px;border:1px solid #d9d9d9;border-radius:3px;background:#fff"></div>
<svg class="a" style="left:1165px;top:165.5px" width="13" height="13" viewBox="0 0 13 13">
  <path d="M1.6 8.6 A5.2 5.2 0 0 1 9.4 2.0" fill="none" stroke="#222" stroke-width="1.3"/>
  <path d="M11.4 4.4 A5.2 5.2 0 0 1 3.6 11.0" fill="none" stroke="#222" stroke-width="1.3"/>
  <path d="M8.2 0.6 L11.6 2.6 L8.4 4.4 Z" fill="#222"/>
  <path d="M4.8 12.4 L1.4 10.4 L4.6 8.6 Z" fill="#222"/>
</svg>
<div class="a" style="left:1185px;top:164px;font-size:12px;line-height:16px;color:#333;-webkit-text-stroke:0.15px #333">任务中心</div>

<!-- toolbar -->
<div class="a" style="left:472px;top:246px;width:774px;height:48px;background:#ebebeb"></div>
<div class="btn" style="left:488px;width:80px;text-align:center">新建账号</div>
<div class="btn" style="left:576px;width:92px;padding-left:16px">导入导出<i class="dch"></i></div>
<div class="btn" style="left:676px;width:92px;padding-left:15px">过滤账号<i class="dch"></i></div>
<div class="btn" style="left:776px;width:197px;border-radius:6px;border-color:#dadada"></div>
<div class="a" style="left:941px;top:255px;width:1px;height:30px;background:#e3e3e3"></div>
<div class="a" style="left:788px;top:263px;font-size:12px;line-height:16px;color:#bdbdbd">请输入账号</div>
<svg class="a" style="left:950px;top:263px" width="14" height="14" viewBox="0 0 14 14">
  <circle cx="5.8" cy="5.8" r="4.6" fill="none" stroke="#777" stroke-width="1.2"/>
  <path d="M9.2 9.2 L12.6 12.6" stroke="#777" stroke-width="1.3"/>
</svg>
<div class="btn" style="left:974px;width:68px;text-align:center">移动到</div>
<div class="btn" style="left:1050px;width:116px;padding-left:15px;background:#dcdee0;border-color:#c9cbcd">账号状态操作<i class="dch"></i></div>
<div class="btn" style="left:1174px;width:56px;text-align:center;background:#ff5419;border-color:#ff5419;color:#fff;-webkit-text-stroke:0.25px #fff;line-height:31px">删除</div>

<!-- pagination -->
<div class="a" style="left:1174px;top:310px;width:32px;height:32px;border:1px solid #00bcde;border-radius:5px"></div>
<svg class="a" style="left:1180px;top:318px" width="20" height="16" viewBox="1180 318 20 16"><path d="M1187.6 324.6 Q1189.6 323.6 1190.6 322.2 L1191.2 322.2 L1191.2 331.4" fill="none" stroke="#00b8dc" stroke-width="1.5"/></svg>
<svg class="a" style="left:1220px;top:318px" width="20" height="18" viewBox="1220 318 20 18"><path d="M1227 322.4 L1233 327 L1227 331.6" fill="none" stroke="#b3b3b3" stroke-width="1.1"/></svg>

<!-- table header -->
<div class="a" style="left:472px;top:358px;width:774px;height:43px;background:#fafafa"></div>
<div class="cb" style="top:371px"></div>
<div class="a" style="left:514px;top:375px;width:8px;height:8px;background:#00bedf"></div>
<div class="a" style="left:560px;top:371px;color:#666;line-height:16px">姓名</div>
<div class="a" style="left:677px;top:371px;color:#666;line-height:16px">工号</div>
<div class="a" style="left:793px;top:371px;color:#666;line-height:16px">邮箱</div>
<div class="a" style="left:909px;top:371px;color:#666;line-height:16px">所属部门</div>
<div class="a" style="left:1026px;top:371px;color:#666;line-height:16px">状态</div>

<!-- rows -->
<div class="sep" style="top:471px"></div>
<div class="sep" style="top:541px"></div>
<div class="sep" style="top:753px"></div>
<div class="a" style="left:558px;top:467px;width:324px;height:8px;background:#fcfcfc"></div>
<div class="a" style="left:558px;top:537px;width:324px;height:8px;background:#fcfcfc"></div>
<div class="a" style="left:472px;top:612px;width:774px;height:70px;background:#e2fdfe;border-radius:7px"></div>
<div class="a" style="left:558px;top:606px;width:324px;height:8px;background:#f7fefe"></div>

<div class="cb" style="top:428px"></div>
<div class="cb" style="top:498px"></div>
<div class="cb" style="top:569px"></div>
<div class="a" style="left:510px;top:640px;width:16px;height:16px;background:#00c1de;border-radius:4px"></div>
<svg class="a" style="left:510px;top:640px" width="16" height="16" viewBox="0 0 16 16"><path d="M3.4 8.4 L7.3 12.1 L13 5.9" fill="none" stroke="#fff" stroke-width="2.1"/></svg>
<div class="cb" style="top:710px"></div>

<div class="dept" style="top:419px">邮箱技术服务团队</div>
<div class="dept" style="top:489px">邮箱技术服务团队5部</div>
<div class="dept" style="top:559px">邮箱技术服务团队</div>
<div class="dept" style="top:630px">邮箱技术服务团队</div>
<div class="dept" style="top:700px">邮箱技术服务团队</div>

<div class="ok" style="top:428px">正常</div>
<div class="ok" style="top:498px">正常</div>
<div class="ok" style="top:569px">正常</div>
<div class="ok" style="top:640px;color:#d1162e">已冻结</div>
<svg class="a" style="left:1073px;top:642px" width="12" height="12" viewBox="0 0 12 12"><circle cx="6" cy="6" r="6" fill="#ff5417"/><rect x="5.2" y="2.6" width="1.6" height="4.4" fill="#fff"/><rect x="5.2" y="7.8" width="1.6" height="1.6" fill="#fff"/></svg>
<div class="ok" style="top:710px">正常</div>

<svg class="a" style="left:1143px;top:429.8px" width="13" height="14" viewBox="0 0 13 14"><rect x="0.8" y="0.6" width="10.4" height="1.3" fill="#f39332"/><path d="M6 3 Q6.4 3 6.8 3.4 L11.6 7.4 Q12.2 8 11.4 8 L9.2 8 L9.2 12 Q9.2 12.8 8.4 12.8 L3.6 12.8 Q2.8 12.8 2.8 12 L2.8 8 L0.6 8 Q-0.2 8 0.4 7.4 L5.2 3.4 Q5.6 3 6 3 Z" fill="#f39332"/></svg>
<div class="lnk" style="left:1162px;top:428px">编辑</div><div class="lnk" style="left:1192px;top:428px">删除</div>
<div class="lnk" style="left:1162px;top:498px">编辑</div><div class="lnk" style="left:1192px;top:498px">删除</div>
<div class="lnk" style="left:1162px;top:569px">编辑</div><div class="lnk" style="left:1192px;top:569px">删除</div>
<div class="lnk" style="left:1162px;top:640px">编辑</div><div class="lnk" style="left:1192px;top:640px">删除</div>
<div class="lnk" style="left:1162px;top:710px">编辑</div><div class="lnk" style="left:1192px;top:710px">删除</div>

<div class="a" style="left:813px;top:422.6px;width:1.6px;height:1.4px;background:#555"></div>
<div class="a" style="left:838.4px;top:422.6px;width:1.6px;height:1.4px;background:#444"></div>
<svg class="a" style="left:853px;top:421px" width="12" height="4" viewBox="0 0 12 4"><path d="M1.4 3.2 Q4.6 0.2 8.2 3.2" fill="none" stroke="#333" stroke-width="1"/><rect x="10.6" y="1" width="1.4" height="1.2" fill="#555"/></svg>
<div class="blk" style="left:565.0px;top:428.0px;width:8.1px;height:8.3px;background:rgb(239,249,251)"></div>
<div class="blk" style="left:572.8px;top:428.0px;width:8.4px;height:8.3px;background:rgb(244,251,252)"></div>
<div class="blk" style="left:580.9px;top:428.0px;width:7.3px;height:8.3px;background:rgb(228,245,249)"></div>
<div class="blk" style="left:587.9px;top:428.0px;width:8.2px;height:8.3px;background:rgb(239,249,251)"></div>
<div class="blk" style="left:595.8px;top:428.0px;width:8.4px;height:8.3px;background:rgb(239,249,251)"></div>
<div class="blk" style="left:603.9px;top:428.0px;width:8.4px;height:8.3px;background:rgb(239,249,251)"></div>
<div class="blk" style="left:612.0px;top:428.0px;width:7.3px;height:8.3px;background:rgb(228,245,249)"></div>
<div class="blk" style="left:619.0px;top:428.0px;width:8.3px;height:8.3px;background:rgb(244,251,252)"></div>
<div class="blk" style="left:565.0px;top:436.0px;width:8.1px;height:8.3px;background:rgb(192,232,242)"></div>
<div class="blk" style="left:572.8px;top:436.0px;width:8.4px;height:8.3px;background:rgb(192,232,242)"></div>
<div class="blk" style="left:580.9px;top:436.0px;width:7.3px;height:8.3px;background:rgb(197,234,243)"></div>
<div class="blk" style="left:587.9px;top:436.0px;width:8.2px;height:8.3px;background:rgb(202,236,244)"></div>
<div class="blk" style="left:595.8px;top:436.0px;width:8.4px;height:8.3px;background:rgb(202,236,244)"></div>
<div class="blk" style="left:603.9px;top:436.0px;width:8.4px;height:8.3px;background:rgb(181,229,240)"></div>
<div class="blk" style="left:612.0px;top:436.0px;width:7.3px;height:8.3px;background:rgb(192,232,242)"></div>
<div class="blk" style="left:619.0px;top:436.0px;width:8.3px;height:8.3px;background:rgb(207,238,245)"></div>
<div class="blk" style="left:565.0px;top:498.0px;width:8.1px;height:8.3px;background:rgb(213,240,246)"></div>
<div class="blk" style="left:572.8px;top:498.0px;width:8.4px;height:8.3px;background:rgb(213,240,246)"></div>
<div class="blk" style="left:580.9px;top:498.0px;width:7.3px;height:8.3px;background:rgb(197,234,243)"></div>
<div class="blk" style="left:587.9px;top:498.0px;width:8.2px;height:8.3px;background:rgb(249,253,253)"></div>
<div class="blk" style="left:565.0px;top:506.0px;width:8.1px;height:7.3px;background:rgb(207,238,245)"></div>
<div class="blk" style="left:572.8px;top:506.0px;width:8.4px;height:7.3px;background:rgb(197,234,243)"></div>
<div class="blk" style="left:580.9px;top:506.0px;width:7.3px;height:7.3px;background:rgb(171,225,238)"></div>
<div class="blk" style="left:587.9px;top:506.0px;width:8.2px;height:7.3px;background:rgb(239,249,251)"></div>
<div class="blk" style="left:580.9px;top:567.0px;width:7.3px;height:8.3px;background:rgb(249,253,253)"></div>
<div class="blk" style="left:587.9px;top:567.0px;width:8.2px;height:8.3px;background:rgb(249,253,253)"></div>
<div class="blk" style="left:565.0px;top:575.0px;width:8.1px;height:8.3px;background:rgb(192,232,242)"></div>
<div class="blk" style="left:572.8px;top:575.0px;width:8.4px;height:8.3px;background:rgb(192,232,242)"></div>
<div class="blk" style="left:580.9px;top:575.0px;width:7.3px;height:8.3px;background:rgb(181,229,240)"></div>
<div class="blk" style="left:587.9px;top:575.0px;width:8.2px;height:8.3px;background:rgb(181,229,240)"></div>
<div class="blk" style="left:595.8px;top:575.0px;width:8.4px;height:8.3px;background:rgb(239,249,251)"></div>
<div class="blk" style="left:565.0px;top:583.0px;width:8.1px;height:8.3px;background:rgb(249,253,253)"></div>
<div class="blk" style="left:565.0px;top:645.0px;width:8.1px;height:7.3px;background:rgb(191,237,245)"></div>
<div class="blk" style="left:572.8px;top:645.0px;width:8.4px;height:7.3px;background:rgb(172,228,240)"></div>
<div class="blk" style="left:565.0px;top:652.0px;width:8.1px;height:8.3px;background:rgb(207,244,249)"></div>
<div class="blk" style="left:572.8px;top:652.0px;width:8.4px;height:8.3px;background:rgb(218,249,252)"></div>
<div class="blk" style="left:565.0px;top:714.0px;width:8.1px;height:8.3px;background:rgb(213,240,246)"></div>
<div class="blk" style="left:572.8px;top:714.0px;width:8.4px;height:8.3px;background:rgb(207,238,245)"></div>
<div class="blk" style="left:580.9px;top:714.0px;width:7.3px;height:8.3px;background:rgb(192,232,242)"></div>
<div class="blk" style="left:587.9px;top:714.0px;width:8.2px;height:8.3px;background:rgb(218,242,247)"></div>
<div class="blk" style="left:595.8px;top:714.0px;width:8.4px;height:8.3px;background:rgb(239,249,251)"></div>
<div class="blk" style="left:565.0px;top:722.0px;width:8.1px;height:7.3px;background:rgb(246,252,253)"></div>
<div class="blk" style="left:572.8px;top:722.0px;width:8.4px;height:7.3px;background:rgb(246,252,253)"></div>
<div class="blk" style="left:580.9px;top:722.0px;width:7.3px;height:7.3px;background:rgb(242,250,252)"></div>
<div class="blk" style="left:587.9px;top:722.0px;width:8.2px;height:7.3px;background:rgb(246,252,253)"></div>
<div class="blk" style="left:595.8px;top:722.0px;width:8.4px;height:7.3px;background:rgb(249,253,253)"></div>
<div class="blk" style="left:673.0px;top:498.0px;width:8.3px;height:8.3px;background:rgb(250,250,251)"></div>
<div class="blk" style="left:681.0px;top:498.0px;width:8.3px;height:8.3px;background:rgb(238,238,242)"></div>
<div class="blk" style="left:673.0px;top:506.0px;width:8.3px;height:7.3px;background:rgb(252,252,252)"></div>
<div class="blk" style="left:681.0px;top:506.0px;width:8.3px;height:7.3px;background:rgb(234,234,239)"></div>
<div class="blk" style="left:789.0px;top:424.0px;width:8.4px;height:4.3px;background:rgb(242,242,242)"></div>
<div class="blk" style="left:797.1px;top:424.0px;width:8.5px;height:4.3px;background:rgb(216,216,217)"></div>
<div class="blk" style="left:805.3px;top:424.0px;width:7.1px;height:4.3px;background:rgb(216,216,217)"></div>
<div class="blk" style="left:812.1px;top:424.0px;width:8.0px;height:4.3px;background:rgb(216,216,217)"></div>
<div class="blk" style="left:819.8px;top:424.0px;width:8.5px;height:4.3px;background:rgb(216,216,217)"></div>
<div class="blk" style="left:828.0px;top:424.0px;width:7.5px;height:4.3px;background:rgb(216,216,217)"></div>
<div class="blk" style="left:835.2px;top:424.0px;width:8.0px;height:4.3px;background:rgb(209,209,211)"></div>
<div class="blk" style="left:842.9px;top:424.0px;width:8.4px;height:4.3px;background:rgb(216,216,217)"></div>
<div class="blk" style="left:851.0px;top:424.0px;width:8.1px;height:4.3px;background:rgb(209,209,211)"></div>
<div class="blk" style="left:858.8px;top:424.0px;width:7.5px;height:4.3px;background:rgb(196,196,198)"></div>
<div class="blk" style="left:866.0px;top:424.0px;width:8.3px;height:4.3px;background:rgb(216,216,217)"></div>
<div class="blk" style="left:789.0px;top:428.0px;width:8.4px;height:8.3px;background:rgb(235,235,236)"></div>
<div class="blk" style="left:797.1px;top:428.0px;width:8.5px;height:8.3px;background:rgb(222,222,223)"></div>
<div class="blk" style="left:805.3px;top:428.0px;width:7.1px;height:8.3px;background:rgb(229,229,230)"></div>
<div class="blk" style="left:812.1px;top:428.0px;width:8.0px;height:8.3px;background:rgb(229,229,230)"></div>
<div class="blk" style="left:819.8px;top:428.0px;width:8.5px;height:8.3px;background:rgb(235,235,236)"></div>
<div class="blk" style="left:828.0px;top:428.0px;width:7.5px;height:8.3px;background:rgb(229,229,230)"></div>
<div class="blk" style="left:835.2px;top:428.0px;width:8.0px;height:8.3px;background:rgb(222,222,223)"></div>
<div class="blk" style="left:842.9px;top:428.0px;width:8.4px;height:8.3px;background:rgb(235,235,236)"></div>
<div class="blk" style="left:851.0px;top:428.0px;width:8.1px;height:8.3px;background:rgb(229,229,230)"></div>
<div class="blk" style="left:858.8px;top:428.0px;width:7.5px;height:8.3px;background:rgb(222,222,223)"></div>
<div class="blk" style="left:866.0px;top:428.0px;width:8.3px;height:8.3px;background:rgb(229,229,230)"></div>
<div class="blk" style="left:812.1px;top:436.0px;width:8.0px;height:7.7px;background:rgb(242,242,242)"></div>
<div class="blk" style="left:789.0px;top:443.4px;width:8.4px;height:8.9px;background:rgb(242,242,242)"></div>
<div class="blk" style="left:797.1px;top:443.4px;width:8.5px;height:8.9px;background:rgb(183,183,186)"></div>
<div class="blk" style="left:805.3px;top:443.4px;width:7.1px;height:8.9px;background:rgb(190,190,192)"></div>
<div class="blk" style="left:812.1px;top:443.4px;width:8.0px;height:8.9px;background:rgb(190,190,192)"></div>
<div class="blk" style="left:819.8px;top:443.4px;width:8.5px;height:8.9px;background:rgb(190,190,192)"></div>
<div class="blk" style="left:828.0px;top:443.4px;width:7.5px;height:8.9px;background:rgb(190,190,192)"></div>
<div class="blk" style="left:828.0px;top:452.0px;width:7.5px;height:7.3px;background:rgb(251,251,251)"></div>
<div class="blk" style="left:789.0px;top:498.0px;width:8.4px;height:8.3px;background:rgb(248,248,248)"></div>
<div class="blk" style="left:797.1px;top:498.0px;width:8.5px;height:8.3px;background:rgb(229,229,230)"></div>
<div class="blk" style="left:805.3px;top:498.0px;width:7.1px;height:8.3px;background:rgb(235,235,236)"></div>
<div class="blk" style="left:812.1px;top:498.0px;width:8.0px;height:8.3px;background:rgb(216,216,217)"></div>
<div class="blk" style="left:819.8px;top:498.0px;width:8.5px;height:8.3px;background:rgb(229,229,230)"></div>
<div class="blk" style="left:828.0px;top:498.0px;width:7.5px;height:8.3px;background:rgb(242,242,242)"></div>
<div class="blk" style="left:835.2px;top:498.0px;width:8.0px;height:8.3px;background:rgb(242,242,242)"></div>
<div class="blk" style="left:842.9px;top:498.0px;width:8.4px;height:8.3px;background:rgb(242,242,242)"></div>
<div class="blk" style="left:851.0px;top:498.0px;width:8.1px;height:8.3px;background:rgb(229,229,230)"></div>
<div class="blk" style="left:858.8px;top:498.0px;width:7.5px;height:8.3px;background:rgb(248,248,248)"></div>
<div class="blk" style="left:866.0px;top:498.0px;width:8.3px;height:8.3px;background:rgb(248,248,248)"></div>
<div class="blk" style="left:789.0px;top:506.0px;width:8.4px;height:7.3px;background:rgb(235,235,236)"></div>
<div class="blk" style="left:797.1px;top:506.0px;width:8.5px;height:7.3px;background:rgb(177,177,180)"></div>
<div class="blk" style="left:805.3px;top:506.0px;width:7.1px;height:7.3px;background:rgb(229,229,230)"></div>
<div class="blk" style="left:812.1px;top:506.0px;width:8.0px;height:7.3px;background:rgb(190,190,192)"></div>
<div class="blk" style="left:819.8px;top:506.0px;width:8.5px;height:7.3px;background:rgb(203,203,205)"></div>
<div class="blk" style="left:828.0px;top:506.0px;width:7.5px;height:7.3px;background:rgb(177,177,180)"></div>
<div class="blk" style="left:835.2px;top:506.0px;width:8.0px;height:7.3px;background:rgb(203,203,205)"></div>
<div class="blk" style="left:842.9px;top:506.0px;width:8.4px;height:7.3px;background:rgb(190,190,192)"></div>
<div class="blk" style="left:851.0px;top:506.0px;width:8.1px;height:7.3px;background:rgb(203,203,205)"></div>
<div class="blk" style="left:858.8px;top:506.0px;width:7.5px;height:7.3px;background:rgb(196,196,198)"></div>
<div class="blk" style="left:866.0px;top:506.0px;width:8.3px;height:7.3px;background:rgb(183,183,186)"></div>
<div class="blk" style="left:866.0px;top:513.0px;width:8.3px;height:8.3px;background:rgb(248,248,248)"></div>
<div class="blk" style="left:789.0px;top:560.0px;width:8.4px;height:7.3px;background:rgb(248,248,248)"></div>
<div class="blk" style="left:797.1px;top:560.0px;width:8.5px;height:7.3px;background:rgb(235,235,236)"></div>
<div class="blk" style="left:805.3px;top:560.0px;width:7.1px;height:7.3px;background:rgb(229,229,230)"></div>
<div class="blk" style="left:812.1px;top:560.0px;width:8.0px;height:7.3px;background:rgb(229,229,230)"></div>
<div class="blk" style="left:819.8px;top:560.0px;width:8.5px;height:7.3px;background:rgb(235,235,236)"></div>
<div class="blk" style="left:828.0px;top:560.0px;width:7.5px;height:7.3px;background:rgb(196,196,198)"></div>
<div class="blk" style="left:835.2px;top:560.0px;width:8.0px;height:7.3px;background:rgb(235,235,236)"></div>
<div class="blk" style="left:842.9px;top:560.0px;width:8.4px;height:7.3px;background:rgb(235,235,236)"></div>
<div class="blk" style="left:851.0px;top:560.0px;width:8.1px;height:7.3px;background:rgb(235,235,236)"></div>
<div class="blk" style="left:858.8px;top:560.0px;width:7.5px;height:7.3px;background:rgb(222,222,223)"></div>
<div class="blk" style="left:866.0px;top:560.0px;width:8.3px;height:7.3px;background:rgb(235,235,236)"></div>
<div class="blk" style="left:789.0px;top:567.0px;width:8.4px;height:8.3px;background:rgb(229,229,230)"></div>
<div class="blk" style="left:797.1px;top:567.0px;width:8.5px;height:8.3px;background:rgb(203,203,205)"></div>
<div class="blk" style="left:805.3px;top:567.0px;width:7.1px;height:8.3px;background:rgb(203,203,205)"></div>
<div class="blk" style="left:812.1px;top:567.0px;width:8.0px;height:8.3px;background:rgb(209,209,211)"></div>
<div class="blk" style="left:819.8px;top:567.0px;width:8.5px;height:8.3px;background:rgb(216,216,217)"></div>
<div class="blk" style="left:828.0px;top:567.0px;width:7.5px;height:8.3px;background:rgb(177,177,180)"></div>
<div class="blk" style="left:835.2px;top:567.0px;width:8.0px;height:8.3px;background:rgb(216,216,217)"></div>
<div class="blk" style="left:842.9px;top:567.0px;width:8.4px;height:8.3px;background:rgb(190,190,192)"></div>
<div class="blk" style="left:851.0px;top:567.0px;width:8.1px;height:8.3px;background:rgb(203,203,205)"></div>
<div class="blk" style="left:858.8px;top:567.0px;width:7.5px;height:8.3px;background:rgb(196,196,198)"></div>
<div class="blk" style="left:866.0px;top:567.0px;width:8.3px;height:8.3px;background:rgb(216,216,217)"></div>
<div class="blk" style="left:789.0px;top:583.0px;width:8.4px;height:7.3px;background:rgb(242,242,242)"></div>
<div class="blk" style="left:797.1px;top:583.0px;width:8.5px;height:7.3px;background:rgb(190,190,192)"></div>
<div class="blk" style="left:805.3px;top:583.0px;width:7.1px;height:7.3px;background:rgb(222,222,223)"></div>
<div class="blk" style="left:789.0px;top:590.0px;width:8.4px;height:8.3px;background:rgb(251,251,251)"></div>
<div class="blk" style="left:797.1px;top:590.0px;width:8.5px;height:8.3px;background:rgb(229,229,230)"></div>
<div class="blk" style="left:805.3px;top:590.0px;width:7.1px;height:8.3px;background:rgb(248,248,248)"></div>
<div class="blk" style="left:797.1px;top:637.0px;width:8.5px;height:8.3px;background:rgb(217,242,244)"></div>
<div class="blk" style="left:805.3px;top:637.0px;width:7.1px;height:8.3px;background:rgb(217,242,244)"></div>
<div class="blk" style="left:812.1px;top:637.0px;width:8.0px;height:8.3px;background:rgb(210,233,235)"></div>
<div class="blk" style="left:819.8px;top:637.0px;width:8.5px;height:8.3px;background:rgb(215,240,241)"></div>
<div class="blk" style="left:842.9px;top:637.0px;width:8.4px;height:8.3px;background:rgb(220,246,247)"></div>
<div class="blk" style="left:851.0px;top:637.0px;width:8.1px;height:8.3px;background:rgb(217,242,244)"></div>
<div class="blk" style="left:789.0px;top:645.0px;width:8.4px;height:7.3px;background:rgb(205,227,229)"></div>
<div class="blk" style="left:797.1px;top:645.0px;width:8.5px;height:7.3px;background:rgb(155,163,167)"></div>
<div class="blk" style="left:805.3px;top:645.0px;width:7.1px;height:7.3px;background:rgb(160,169,173)"></div>
<div class="blk" style="left:812.1px;top:645.0px;width:8.0px;height:7.3px;background:rgb(165,176,179)"></div>
<div class="blk" style="left:819.8px;top:645.0px;width:8.5px;height:7.3px;background:rgb(175,189,192)"></div>
<div class="blk" style="left:828.0px;top:645.0px;width:7.5px;height:7.3px;background:rgb(155,163,167)"></div>
<div class="blk" style="left:835.2px;top:645.0px;width:8.0px;height:7.3px;background:rgb(170,182,185)"></div>
<div class="blk" style="left:842.9px;top:645.0px;width:8.4px;height:7.3px;background:rgb(165,176,179)"></div>
<div class="blk" style="left:851.0px;top:645.0px;width:8.1px;height:7.3px;background:rgb(175,189,192)"></div>
<div class="blk" style="left:858.8px;top:645.0px;width:7.5px;height:7.3px;background:rgb(175,189,192)"></div>
<div class="blk" style="left:866.0px;top:645.0px;width:8.3px;height:7.3px;background:rgb(170,182,185)"></div>
<div class="blk" style="left:812.1px;top:652.0px;width:8.0px;height:7.8px;background:rgb(210,233,235)"></div>
<div class="blk" style="left:819.8px;top:652.0px;width:8.5px;height:7.8px;background:rgb(220,246,247)"></div>
<div class="blk" style="left:866.0px;top:652.0px;width:8.3px;height:7.8px;background:rgb(215,240,241)"></div>
<div class="blk" style="left:805.3px;top:699.0px;width:7.1px;height:7.3px;background:rgb(248,248,248)"></div>
<div class="blk" style="left:812.1px;top:699.0px;width:8.0px;height:7.3px;background:rgb(248,248,248)"></div>
<div class="blk" style="left:828.0px;top:699.0px;width:7.5px;height:7.3px;background:rgb(235,235,236)"></div>
<div class="blk" style="left:835.2px;top:699.0px;width:8.0px;height:7.3px;background:rgb(248,248,248)"></div>
<div class="blk" style="left:858.8px;top:699.0px;width:7.5px;height:7.3px;background:rgb(248,248,248)"></div>
<div class="blk" style="left:866.0px;top:699.0px;width:8.3px;height:7.3px;background:rgb(251,251,251)"></div>
<div class="blk" style="left:789.0px;top:706.0px;width:8.4px;height:8.3px;background:rgb(235,235,236)"></div>
<div class="blk" style="left:797.1px;top:706.0px;width:8.5px;height:8.3px;background:rgb(196,196,198)"></div>
<div class="blk" style="left:805.3px;top:706.0px;width:7.1px;height:8.3px;background:rgb(190,190,192)"></div>
<div class="blk" style="left:812.1px;top:706.0px;width:8.0px;height:8.3px;background:rgb(196,196,198)"></div>
<div class="blk" style="left:819.8px;top:706.0px;width:8.5px;height:8.3px;background:rgb(209,209,211)"></div>
<div class="blk" style="left:828.0px;top:706.0px;width:7.5px;height:8.3px;background:rgb(177,177,180)"></div>
<div class="blk" style="left:835.2px;top:706.0px;width:8.0px;height:8.3px;background:rgb(203,203,205)"></div>
<div class="blk" style="left:842.9px;top:706.0px;width:8.4px;height:8.3px;background:rgb(183,183,186)"></div>
<div class="blk" style="left:851.0px;top:706.0px;width:8.1px;height:8.3px;background:rgb(196,196,198)"></div>
<div class="blk" style="left:858.8px;top:706.0px;width:7.5px;height:8.3px;background:rgb(190,190,192)"></div>
<div class="blk" style="left:866.0px;top:706.0px;width:8.3px;height:8.3px;background:rgb(209,209,211)"></div>
<div class="blk" style="left:805.3px;top:714.0px;width:7.1px;height:8.3px;background:rgb(252,252,252)"></div>
<div class="blk" style="left:812.1px;top:714.0px;width:8.0px;height:8.3px;background:rgb(252,252,252)"></div>
<div class="blk" style="left:819.8px;top:714.0px;width:8.5px;height:8.3px;background:rgb(252,252,252)"></div>
<div class="blk" style="left:828.0px;top:714.0px;width:7.5px;height:8.3px;background:rgb(239,239,240)"></div>
<div class="blk" style="left:835.2px;top:714.0px;width:8.0px;height:8.3px;background:rgb(252,252,252)"></div>
<div class="blk" style="left:842.9px;top:714.0px;width:8.4px;height:8.3px;background:rgb(252,252,252)"></div>
<div class="blk" style="left:851.0px;top:714.0px;width:8.1px;height:8.3px;background:rgb(252,252,252)"></div>
<div class="blk" style="left:858.8px;top:714.0px;width:7.5px;height:8.3px;background:rgb(252,252,252)"></div>
<div class="blk" style="left:866.0px;top:714.0px;width:8.3px;height:8.3px;background:rgb(252,252,252)"></div>
<div class="blk" style="left:789.0px;top:722.0px;width:8.4px;height:7.3px;background:rgb(244,244,245)"></div>
<div class="blk" style="left:797.1px;top:722.0px;width:8.5px;height:7.3px;background:rgb(216,216,217)"></div>
<div class="blk" style="left:805.3px;top:722.0px;width:7.1px;height:7.3px;background:rgb(235,235,236)"></div>
<div class="blk" style="left:789.0px;top:729.0px;width:8.4px;height:8.3px;background:rgb(248,248,248)"></div>
<div class="blk" style="left:797.1px;top:729.0px;width:8.5px;height:8.3px;background:rgb(209,209,211)"></div>
<div class="blk" style="left:805.3px;top:729.0px;width:7.1px;height:8.3px;background:rgb(235,235,236)"></div>

<!-- dropdown -->
<div class="a" style="left:1050px;top:290px;width:116px;height:136px;background:#fff;border-radius:7px;box-shadow:0 3px 22px rgba(0,0,0,0.12)"></div>
<div class="a" style="left:1053px;top:293px;width:96px;height:32px;border:4px solid #f00;border-radius:2px"></div>
<div class="a" style="left:1066px;top:301px;font-size:14px;line-height:18px;color:#333;-webkit-text-stroke:0.1px #333">解冻账号</div>
<div class="a" style="left:1066px;top:333px;font-size:14px;line-height:18px;color:#333;-webkit-text-stroke:0.1px #333">冻结账号</div>
<div class="a" style="left:1066px;top:365px;font-size:14px;line-height:18px;color:#333;-webkit-text-stroke:0.1px #333">解锁账号</div>
<div class="a" style="left:1066px;top:397px;font-size:14px;line-height:18px;color:#333;-webkit-text-stroke:0.1px #333">解封账号</div>


<!-- MAIN -->
<div class="blk" style="left:1021.0px;top:19.0px;width:7.3px;height:8.3px;background:rgb(62,66,70)"></div>
<div class="blk" style="left:1028.0px;top:19.0px;width:8.3px;height:8.3px;background:rgb(114,116,121)"></div>
<div class="blk" style="left:1036.0px;top:19.0px;width:8.3px;height:8.3px;background:rgb(108,111,115)"></div>
<div class="blk" style="left:1044.0px;top:19.0px;width:8.3px;height:8.3px;background:rgb(108,111,115)"></div>
<div class="blk" style="left:1052.0px;top:19.0px;width:7.3px;height:8.3px;background:rgb(122,124,129)"></div>
<div class="blk" style="left:1059.0px;top:19.0px;width:8.3px;height:8.3px;background:rgb(101,104,108)"></div>
<div class="blk" style="left:1067.0px;top:19.0px;width:8.3px;height:8.3px;background:rgb(114,116,121)"></div>
<div class="blk" style="left:1075.0px;top:19.0px;width:8.3px;height:8.3px;background:rgb(111,114,118)"></div>
<div class="blk" style="left:1083.0px;top:19.0px;width:7.3px;height:8.3px;background:rgb(94,97,102)"></div>
<div class="blk" style="left:1090.0px;top:19.0px;width:8.3px;height:8.3px;background:rgb(118,120,125)"></div>
<div class="blk" style="left:1098.0px;top:19.0px;width:8.3px;height:8.3px;background:rgb(118,120,125)"></div>
<div class="blk" style="left:1106.0px;top:19.0px;width:6.3px;height:8.3px;background:rgb(61,65,69)"></div>
<div class="blk" style="left:1021.0px;top:27.0px;width:7.3px;height:7.8px;background:rgb(64,68,72)"></div>
<div class="blk" style="left:1028.0px;top:27.0px;width:8.3px;height:7.8px;background:rgb(74,77,81)"></div>
<div class="blk" style="left:1036.0px;top:27.0px;width:8.3px;height:7.8px;background:rgb(65,69,73)"></div>
<div class="blk" style="left:1044.0px;top:27.0px;width:8.3px;height:7.8px;background:rgb(81,84,88)"></div>
<div class="blk" style="left:1052.0px;top:27.0px;width:7.3px;height:7.8px;background:rgb(81,84,88)"></div>
<div class="blk" style="left:1059.0px;top:27.0px;width:8.3px;height:7.8px;background:rgb(69,73,77)"></div>
<div class="blk" style="left:1067.0px;top:27.0px;width:8.3px;height:7.8px;background:rgb(69,73,77)"></div>
<div class="blk" style="left:1075.0px;top:27.0px;width:8.3px;height:7.8px;background:rgb(67,70,74)"></div>
<div class="blk" style="left:1083.0px;top:27.0px;width:7.3px;height:7.8px;background:rgb(69,73,77)"></div>
<div class="blk" style="left:1090.0px;top:27.0px;width:8.3px;height:7.8px;background:rgb(69,73,77)"></div>
<div class="blk" style="left:1098.0px;top:27.0px;width:8.3px;height:7.8px;background:rgb(76,80,84)"></div>

</body></html>
